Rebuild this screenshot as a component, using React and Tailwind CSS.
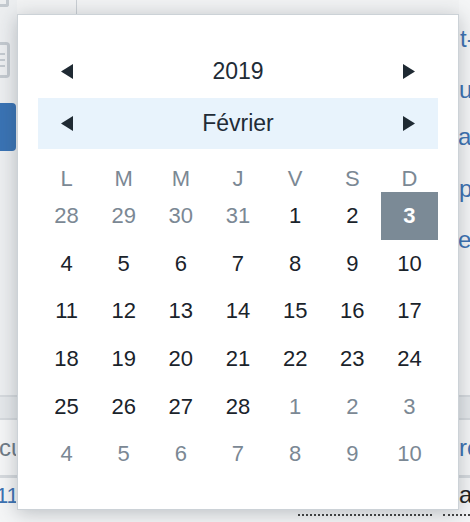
import React from "react";

const Tri = ({ dir }) => (
  <svg width="12" height="15" viewBox="0 0 12 15" className="block">
    {dir === "left" ? (
      <polygon points="12,0 12,15 0,7.5" fill="#1f2a33" />
    ) : (
      <polygon points="0,0 0,15 12,7.5" fill="#1f2a33" />
    )}
  </svg>
);

const weeks = [
  [[28, 0], [29, 0], [30, 0], [31, 0], [1, 1], [2, 1], [3, 2]],
  [[4, 1], [5, 1], [6, 1], [7, 1], [8, 1], [9, 1], [10, 1]],
  [[11, 1], [12, 1], [13, 1], [14, 1], [15, 1], [16, 1], [17, 1]],
  [[18, 1], [19, 1], [20, 1], [21, 1], [22, 1], [23, 1], [24, 1]],
  [[25, 1], [26, 1], [27, 1], [28, 1], [1, 0], [2, 0], [3, 0]],
  [[4, 0], [5, 0], [6, 0], [7, 0], [8, 0], [9, 0], [10, 0]],
];

export default function App() {
  return (
    <div className="relative w-[470px] h-[522px] overflow-hidden bg-[#f4f5f6] font-['Liberation_Sans',Arial,sans-serif]">
      {/* background page */}
      <div className="flex flex-col w-full h-full">
        <div className="flex h-[395px]">
          <div className="w-[17px] flex flex-col bg-[#eceef0]">
            <div className="w-[9px] h-[7px] border-b-[3px] border-r-[3px] border-[#c3c9cf] rounded-br-[3px]" />
            <div className="mt-[35px] w-[10px] h-[36px] border-y-[3px] border-r-[3px] border-[#c3c9cf] rounded-r-[4px] flex flex-col justify-center gap-[4px]">
              <div className="w-[5px] h-[2px] bg-[#c3c9cf]" />
              <div className="w-[5px] h-[2px] bg-[#c3c9cf]" />
              <div className="w-[5px] h-[2px] bg-[#c3c9cf]" />
            </div>
            <div className="mt-[25px] w-[16px] h-[48px] bg-[#3a73b4] rounded-r-[4px]" />
          </div>
          <div className="flex-1 flex flex-col">
            <div className="h-[14px] flex bg-[#f1f2f3]">
              <div className="w-[60px] border-r border-[#c9ced3]" />
            </div>
          </div>
          <div className="w-[11px] flex flex-col text-[24px] leading-[24px] text-[#3d72b2] overflow-hidden whitespace-nowrap">
            <div className="mt-[27px] ml-[1px]">t-</div>
            <div className="mt-[27px] ml-[0px]">u</div>
            <div className="mt-[23px] -ml-[1px]">ai</div>
            <div className="mt-[28px] ml-[0px]">p</div>
            <div className="mt-[27px] -ml-[1px]">e</div>
          </div>
        </div>
        <div className="h-[25px] border-y-2 border-[#d5d9dd] bg-[#e4e7ea]" />
        <div className="h-[58px] flex justify-between items-center border-b-[3px] border-[#d5d9dd]">
          <div className="text-[24px] text-[#6f7b86] -ml-[1px] w-[17px] overflow-hidden whitespace-nowrap">cu</div>
          <div className="text-[24px] text-[#3d72b2] w-[11px] overflow-hidden whitespace-nowrap">rc</div>
        </div>
        <div className="flex-1 flex flex-col">
          <div className="flex justify-between items-center h-[34px]">
            <div className="text-[22px] text-[#3d72b2] -ml-[4px] w-[20px] overflow-hidden whitespace-nowrap">11</div>
            <div className="text-[24px] text-[#222] w-[11px] overflow-hidden whitespace-nowrap">a</div>
          </div>
          <div className="flex mt-[2px]">
            <div className="ml-[298px] w-[134px] border-b-2 border-dotted border-[#444]" />
            <div className="ml-[11px] flex-1 border-b-2 border-dotted border-[#444]" />
          </div>
        </div>
      </div>

      {/* calendar popup */}
      <div className="absolute left-[17px] top-[14px] w-[442px] h-[496px] bg-white border border-[#ccd2d7] shadow-[0_3px_18px_rgba(40,50,60,0.28)] px-[20px] pt-[31px]">
        <div className="grid grid-cols-7 h-[50px] items-center text-[23px] text-[#212b36]">
          <div className="flex justify-center"><Tri dir="left" /></div>
          <div className="col-span-5 text-center">2019</div>
          <div className="flex justify-center"><Tri dir="right" /></div>
        </div>
        <div className="mt-[2px] grid grid-cols-7 h-[51px] items-center bg-[#e8f3fc] text-[23px] text-[#212b36]">
          <div className="flex justify-center"><Tri dir="left" /></div>
          <div className="col-span-5 text-center">Février</div>
          <div className="flex justify-center"><Tri dir="right" /></div>
        </div>
        <div className="mt-[13px] grid grid-cols-7 h-[30px] items-center text-[22px] text-[#7b8894] text-center">
          {["L", "M", "M", "J", "V", "S", "D"].map((d, i) => (
            <div key={i}>{d}</div>
          ))}
        </div>
        {weeks.map((w, ri) => (
          <div key={ri} className="grid grid-cols-7 h-[47.6px] text-[22px] text-center">
            {w.map(([n, t], ci) => (
              <div
                key={ci}
                className={
                  t === 2
                    ? "flex items-center justify-center bg-[#7b8a96] text-white font-bold"
                    : t === 1
                    ? "flex items-center justify-center text-[#1a232b]"
                    : "flex items-center justify-center text-[#7b8894]"
                }
              >
                {n}
              </div>
            ))}
          </div>
        ))}
      </div>
    </div>
  );
}
